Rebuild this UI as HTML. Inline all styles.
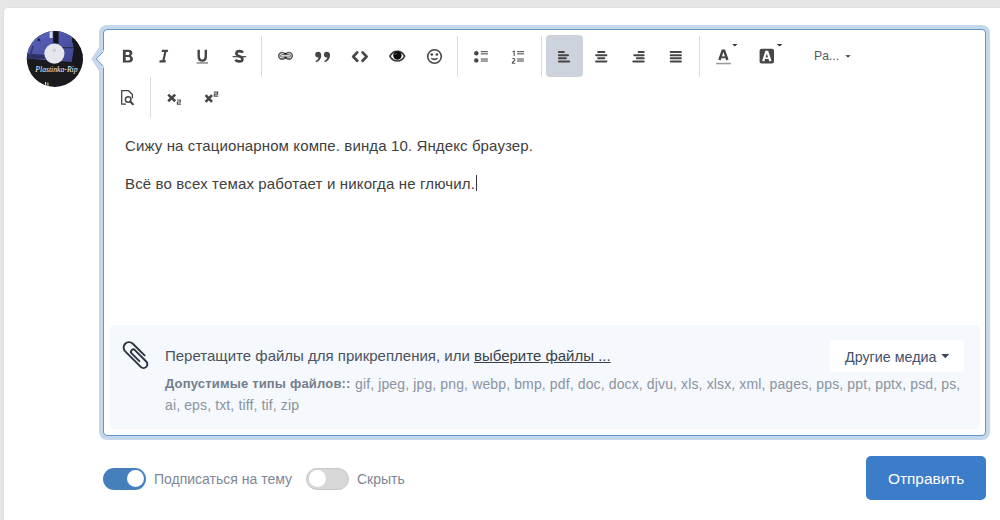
<!DOCTYPE html>
<html><head><meta charset="utf-8">
<style>
html,body{margin:0;padding:0;}
body{width:1000px;height:520px;overflow:hidden;background:#e6e6e6;position:relative;font-family:"Liberation Sans",sans-serif;}
.abs{position:absolute;white-space:nowrap;line-height:1;}
#card{position:absolute;left:4px;top:8px;width:1010px;height:530px;background:#fff;border-radius:4px;box-shadow:0 0 0 1px #e0e0e0;}
#editor{position:absolute;left:103px;top:29px;width:881px;height:405px;border:1px solid #6295c8;border-radius:4px;box-shadow:0 0 0 4px #c5d7ea;background:#fff;}
#attach{position:absolute;left:109px;top:325px;width:871px;height:104px;background:#f5f8fc;border-radius:6px;}
#hl{position:absolute;left:546px;top:35px;width:37px;height:42px;background:#cdd3dc;border-radius:4px;}
.sep{position:absolute;width:1px;background:#d8dde5;}
#media{position:absolute;left:829px;top:340px;width:135px;height:32px;background:#fff;border-radius:4px;}
#send{position:absolute;left:866px;top:456px;width:120px;height:44px;background:#3b7dc9;border-radius:5px;}
#tg1{position:absolute;left:102.5px;top:468px;width:43px;height:22px;background:#4580bd;border-radius:11px;}
#tg1 i{position:absolute;left:24.8px;top:2.2px;width:17.2px;height:17.2px;border-radius:50%;background:#fff;}
#tg2{position:absolute;left:306px;top:468px;width:41px;height:20px;background:#d7d7d7;border:1px solid #c8c8c8;border-radius:11px;}
#tg2 i{position:absolute;left:2px;top:1px;width:17px;height:17px;border-radius:50%;background:#fff;}
</style></head><body>
<div id="card"></div>
<div id="editor"></div>
<div id="hl"></div>
<div class="sep" style="left:261px;top:36px;height:41px"></div>
<div class="sep" style="left:457px;top:36px;height:41px"></div>
<div class="sep" style="left:541px;top:36px;height:41px"></div>
<div class="sep" style="left:699px;top:36px;height:41px"></div>
<div class="sep" style="left:150px;top:77px;height:41px"></div>

<div class="abs" style="left:125px;top:138px;font-size:15px;letter-spacing:0.12px;color:#404040">Сижу на стационарном компе. винда 10. Яндекс браузер.</div>
<div class="abs" style="left:125px;top:175.5px;font-size:15px;letter-spacing:0.15px;color:#404040">Всё во всех темах работает и никогда не глючил.</div>
<div class="abs" style="left:476px;top:175px;width:1px;height:16px;background:#333"></div>

<div id="attach"></div>
<div class="abs" style="left:165px;top:348px;font-size:15px;color:#4a5260">Перетащите файлы для прикрепления, или <span style="text-decoration:underline;color:#3a3f48">выберите файлы ...</span></div>
<div class="abs" style="left:165px;top:377px;font-size:13px;font-weight:bold;letter-spacing:0.17px;color:#747e8d">Допустимые типы файлов::</div>
<div class="abs" style="left:355px;top:376.5px;font-size:14px;letter-spacing:0.13px;color:#8a93a0">gif, jpeg, jpg, png, webp, bmp, pdf, doc, docx, djvu, xls, xlsx, xml, pages, pps, ppt, pptx, psd, ps,</div>
<div class="abs" style="left:165px;top:397.5px;font-size:14px;letter-spacing:0.13px;color:#8a93a0">ai, eps, txt, tiff, tif, zip</div>
<div id="media"></div>
<div class="abs" style="left:845px;top:349.5px;font-size:14.3px;color:#44516a">Другие медиа</div>

<div id="tg1"><i></i></div>
<div class="abs" style="left:154px;top:472px;font-size:14px;color:#7e8796">Подписаться на тему</div>
<div id="tg2"><i></i></div>
<div class="abs" style="left:357px;top:472px;font-size:14px;color:#7e8796">Скрыть</div>
<div id="send"></div>
<div class="abs" style="left:888px;top:470.5px;font-size:15.4px;color:#fff">Отправить</div>
<div class="abs" style="left:814px;top:50.3px;font-size:12.2px;color:#5a5a5a">Pa...</div>

<svg style="position:absolute;left:0;top:0" width="1000" height="520" viewBox="0 0 1000 520">
<!-- avatar -->
<defs><clipPath id="av"><circle cx="54.8" cy="59" r="28"/></clipPath>
<linearGradient id="bl" x1="0" y1="0" x2="1" y2="1"><stop offset="0" stop-color="#5e66c2"/><stop offset="1" stop-color="#3f4590"/></linearGradient></defs>
<g clip-path="url(#av)">
<rect x="26" y="31" width="58" height="58" fill="#1a1a1f"/>
<polygon points="26,31 72,31 72,40 74,48 72,62 26,58.5" fill="url(#bl)"/>
<polygon points="26,53.5 46,55 46,58.8 26,58.8" fill="#2e3160"/>
<path d="M29.5,58L33,46" stroke="#343874" stroke-width="1.6"/>
<path d="M62,47.7H74" stroke="#2a2c50" stroke-width="1.2"/>
<polygon points="72,31 84,31 84,70 72,62 74,48 72,40" fill="#16161c"/>
<rect x="53.2" y="31" width="5.4" height="12.5" fill="#141418"/>
<rect x="49.6" y="31" width="3" height="7" fill="#d8d8e8"/>
<path d="M37.8,41.2L38.9,38.6L40,41.2" stroke="#111" stroke-width="1" fill="none"/>
<circle cx="54.4" cy="53.6" r="10.1" fill="#e4e6eb"/>
<circle cx="54.4" cy="50.5" r="1.8" fill="#c4d4e8"/>
<text x="35.3" y="72" textLength="42.3" lengthAdjust="spacingAndGlyphs" font-family="Liberation Serif" font-style="italic" font-size="8.5" fill="#f2f2f2">Plastinka-Rip</text>
<rect x="45" y="82" width="1.2" height="7" fill="#d8d098"/>
<rect x="47.3" y="82.5" width="1.2" height="7" fill="#c8c088"/>
</g>
<!-- arrow -->
<polygon points="99,47 91.3,59 99,71" fill="#c5d7ea"/>
<rect x="102.5" y="50.5" width="4" height="17" fill="#fff"/>
<polygon points="103.5,51.5 96.3,59 103.5,66.5" fill="#fff"/>
<polyline points="103.5,51.5 96.3,59 103.5,66.5" fill="none" stroke="#6295c8" stroke-width="1"/>
<g fill="#454545">
<!-- B -->
<path fill-rule="evenodd" d="M122.9,49.8H128.6C131.3,49.8 132.4,51.2 132.4,52.9C132.4,54.3 131.6,55.3 130.6,55.8C132,56.2 132.9,57.4 132.9,59C132.9,61.2 131.4,62.5 128.8,62.5H122.9Z M125.7,51.9V54.9H128.1C129.1,54.9 129.6,54.3 129.6,53.4C129.6,52.5 129.1,51.9 128.1,51.9Z M125.7,57V60.4H128.4C129.5,60.4 130.1,59.7 130.1,58.7C130.1,57.7 129.5,57 128.4,57Z"/>
<!-- I -->
<path d="M162,49.8H168.2L167.8,51.9H161.6Z M164.2,51.9H166.4L164.6,60.3H162.4Z M159.7,60.2H165.9L165.5,62.5H159.3Z"/>
</g>
<g fill="none" stroke="#454545">
<!-- U -->
<path d="M198.7,49.8V56.3C198.7,59 200.2,60.6 202.25,60.6C204.3,60.6 205.8,59 205.8,56.3V49.8" stroke-width="2.4"/>
<!-- S -->
<path d="M242.9,52.6C242.2,51.4 240.9,51.1 239.5,51.1C237.6,51.1 236.4,52.1 236.4,53.5C236.4,55.2 238,55.7 239.4,56.2C241.2,56.8 242.4,57.5 242.4,59.2C242.4,60.7 241.1,61.4 239.2,61.4C237.6,61.4 236.2,60.9 235.4,59.7" stroke-width="2.6"/>
</g>
<rect x="196.6" y="62.2" width="11.4" height="1.5" fill="#8a8a8a"/>
<rect x="232.6" y="56.1" width="13.6" height="1.2" fill="#454545"/>

<!-- link -->
<g fill="none" stroke="#5c5c5c" stroke-width="1.6">
<ellipse cx="282.1" cy="55.8" rx="3.4" ry="3.3"/>
<ellipse cx="288.9" cy="55.8" rx="3.4" ry="3.3"/>
</g>
<rect x="280.4" y="54.6" width="10.2" height="2.4" rx="1.2" fill="#e0e0e0" stroke="#5a5a5a" stroke-width="0.9"/>
<circle cx="285.5" cy="53.7" r="1" fill="#111"/>
<circle cx="285.5" cy="57.7" r="1" fill="#111"/>
<!-- quote -->
<g fill="#454545">
<circle cx="318.1" cy="54.6" r="2.9"/>
<path d="M320.6,53.2C322.2,56 321,60.2 316.2,62.3L315.4,61.2C317.6,60 318.8,58.2 318.6,56.8Z"/>
<circle cx="326.8" cy="54.6" r="2.9"/>
<path d="M329.3,53.2C330.9,56 329.7,60.2 324.9,62.3L324.1,61.2C326.3,60 327.5,58.2 327.3,56.8Z"/>
</g>
<!-- code -->
<g fill="none" stroke="#474747" stroke-width="2.8" stroke-linejoin="round" stroke-linecap="round">
<polyline points="357.2,52.4 353.2,56.6 357.2,60.8"/>
<polyline points="362.6,52.4 366.6,56.6 362.6,60.8"/>
</g>
<!-- eye -->
<path d="M389.9,56.1C391.6,52.9 394.1,51.3 397.3,51.3C400.5,51.3 403,52.9 404.6,56.1C403,59.4 400.5,61 397.3,61C394.1,61 391.6,59.4 389.9,56.1Z" fill="none" stroke="#3a3a3a" stroke-width="1.7"/>
<circle cx="397.4" cy="55.5" r="4.2" fill="#0d0d0d"/>
<path d="M395.2,54.6L396.4,53.2" stroke="#888" stroke-width="0.9"/>
<!-- smile -->
<circle cx="434.5" cy="56.5" r="6.8" fill="none" stroke="#474747" stroke-width="1.6"/>
<circle cx="431.8" cy="54.5" r="1.35" fill="#474747"/>
<circle cx="436.9" cy="54.5" r="1.35" fill="#474747"/>
<path d="M431.3,58.2C432.5,59 436.2,59 437.6,58.2C437.2,60.3 431.7,60.3 431.3,58.2Z" fill="#474747" stroke="#474747" stroke-width="0.8"/>

<!-- ul -->
<g fill="#454545">
<circle cx="476.3" cy="53.2" r="2.2"/>
<circle cx="476.3" cy="60.4" r="2.2"/>
<circle cx="513.8" cy="53.2" r="0" />
</g>
<g fill="#555">
<rect x="480.8" y="51.1" width="7.1" height="1.1"/>
<rect x="480.8" y="53.3" width="7.1" height="1.1"/>
<rect x="480.8" y="58.5" width="7.1" height="1.1"/>
<rect x="480.8" y="60.5" width="7.1" height="1.1"/>
<rect x="517.1" y="51.1" width="6.8" height="1.1"/>
<rect x="517.1" y="53.3" width="6.8" height="1.1"/>
<rect x="517.1" y="58.5" width="6.8" height="1.1"/>
<rect x="517.1" y="60.5" width="6.8" height="1.1"/>
</g>
<g fill="none" stroke="#555" stroke-width="1.1">
<path d="M512.6,51.9L514.2,51.2V56"/>
<path d="M512.3,59C513,58.2 514.9,58.3 514.9,59.5C514.9,60.8 512.3,61.8 512.3,63.2H515.2"/>
</g>

<!-- align -->
<g fill="#454545">
<rect x="557.9" y="51.0" width="7" height="2" rx="1"/>
<rect x="557.9" y="54.2" width="11.1" height="2" rx="1"/>
<rect x="557.9" y="57.3" width="9" height="2" rx="1"/>
<rect x="557.9" y="60.5" width="12.3" height="2" rx="1"/>

<rect x="597.1" y="51.0" width="8.2" height="2" rx="1"/>
<rect x="595.1" y="54.2" width="12.3" height="2" rx="1"/>
<rect x="597.1" y="57.3" width="8.2" height="2" rx="1"/>
<rect x="595.1" y="60.5" width="12.3" height="2" rx="1"/>

<rect x="637.6" y="51.0" width="7.1" height="2" rx="1"/>
<rect x="633.3" y="54.2" width="11.4" height="2" rx="1"/>
<rect x="635.8" y="57.3" width="8.9" height="2" rx="1"/>
<rect x="632.3" y="60.5" width="12.4" height="2" rx="1"/>

<rect x="669.7" y="51.0" width="12.2" height="2" rx="1"/>
<rect x="669.7" y="54.2" width="12.2" height="2" rx="1"/>
<rect x="669.7" y="57.3" width="12.2" height="2" rx="1"/>
<rect x="669.7" y="60.5" width="12.2" height="2" rx="1"/>
</g>

<!-- text color -->
<path d="M719.4,60L722.6,50.6H724.2L727.4,60" fill="none" stroke="#454545" stroke-width="2.4"/>
<rect x="720.8" y="56.4" width="5" height="1.8" fill="#454545"/>
<rect x="716" y="62.8" width="15" height="1.5" fill="#9a9a9a"/>
<polygon points="732.2,44 737.4,44 734.8,46.6" fill="#333"/>
<!-- bg color -->
<rect x="759.6" y="48.8" width="14.4" height="14.8" rx="2" fill="#474747"/>
<path d="M763.2,61.2L766.2,51.8H767.4L770.4,61.2" fill="none" stroke="#fff" stroke-width="2.2"/>
<rect x="764.6" y="57.4" width="4.4" height="1.6" fill="#fff"/>
<polygon points="776.8,44 782.4,44 779.6,46.6" fill="#333"/>
<!-- Pa caret -->
<polygon points="845.3,55.2 850.7,55.2 848,57.6" fill="#333"/>

<!-- preview -->
<path d="M126,104.2H121.7V90.7H128.6L132.4,94.5V98.2" fill="none" stroke="#454545" stroke-width="1.3"/>
<circle cx="128.2" cy="99.5" r="2.8" fill="none" stroke="#454545" stroke-width="1.5"/>
<path d="M130.2,101.5L132.9,104.2" stroke="#454545" stroke-width="2.1" stroke-linecap="round"/>
<!-- sub/sup -->
<g stroke="#454545" stroke-width="2.6">
<path d="M168.2,94.6L175.2,101.3M175.2,94.6L168.2,101.3"/>
<path d="M205.6,95.2L212,101.8M212,95.2L205.6,101.8"/>
</g>
<g fill="none" stroke="#505050" stroke-width="1.2">
<path d="M177,100H180.3V102H177.4V104.2H180.9"/>
<path d="M213.9,92.2H217.6V94.2H214.3V96.2H218.2"/>
</g>
<!-- paperclip -->
<path transform="translate(136.1,354.6) rotate(45)" d="M6.6,-5.4H-10A5.4,5.4 0 0 0 -10,5.4H12A3.85,3.85 0 0 0 12,-2.3H-4A2.3,2.3 0 0 0 -4,2.3H7" fill="none" stroke="#2d3440" stroke-width="1.9" stroke-linecap="round"/>
<!-- media caret -->
<polygon points="941.2,354 949.4,354 945.3,358.2" fill="#3e4a5a"/>
</svg>
</body></html>
